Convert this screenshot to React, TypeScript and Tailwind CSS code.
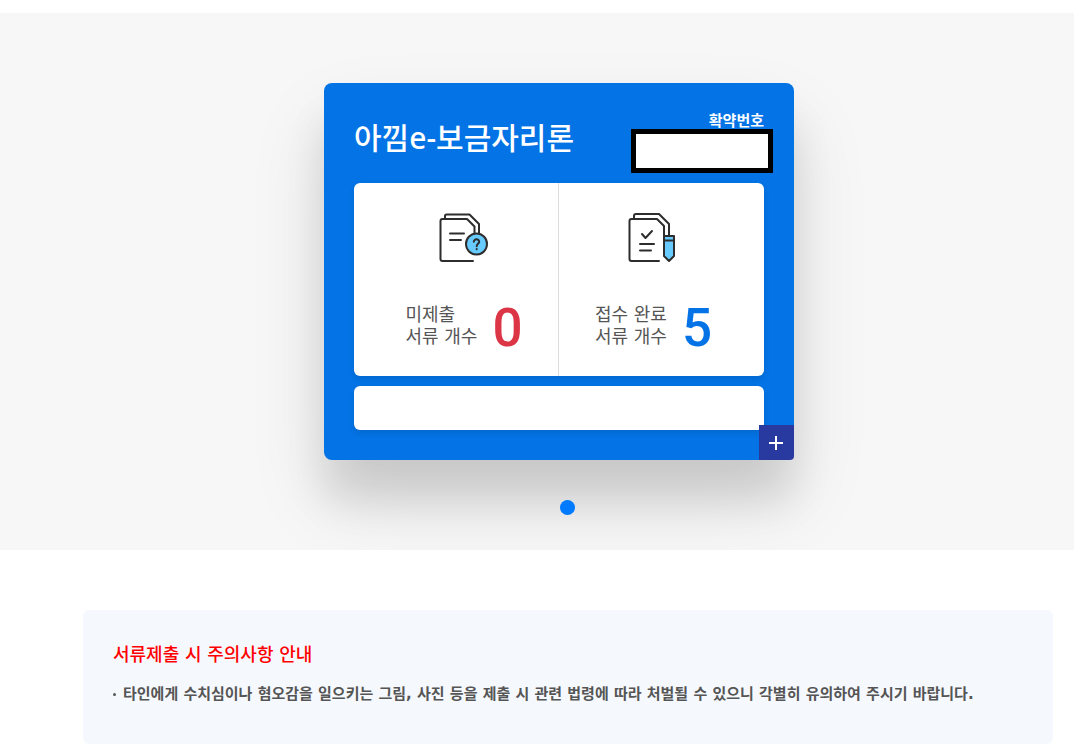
import type { ReactNode } from "react";

const NOTICES = [
  "타인에게 수치심이나 혐오감을 일으키는 그림, 사진 등을 제출 시 관련 법령에 따라 처벌될 수 있으니 각별히 유의하여 주시기 바랍니다.",
];

function MissingDocIcon() {
  return (
    <svg viewBox="0 0 50 50" className="h-[50px] w-[50px]" fill="none" stroke="#2d2d2d" strokeWidth="2" strokeLinecap="round" strokeLinejoin="round" aria-hidden="true">
      <path d="M6 5V3Q6 1.500 7.500 1.500H30.500L40 11V22" />
      <path d="M34 48H3.500Q1.500 48 1.500 46V8Q1.500 6 3.500 6H28L35.500 13.500V22" />
      <path d="M11 20.500H25M11 27H22" />
      <circle cx="37.500" cy="31" r="10.500" fill="#68cbff" />
      <path d="M34.800 28.800C34.800 25.400 40.400 25.600 40.200 28.900C40.100 30.900 37.700 30.900 37.700 33.200M37.700 36V36.200" />
    </svg>
  );
}

function ReceivedDocIcon() {
  return (
    <svg viewBox="1 0 50 50" className="h-[50px] w-[50px] overflow-visible" fill="none" stroke="#2d2d2d" strokeWidth="2" strokeLinecap="round" strokeLinejoin="round" aria-hidden="true">
      <path d="M6 5V3Q6 1 8 1H31L41 11V22" />
      <path d="M31 48H3.500Q1.500 48 1.500 46V8Q1.500 6 3.500 6H29L36 13V22" />
      <path d="M14 21L17.500 25L24 18M12 31H26M12 37.500H23" />
      <path d="M36 23H46V43L41 48L36 43Z" fill="#68cbff" />
      <path d="M36 27.500H46" />
    </svg>
  );
}

function CountPanel({ icon, label, count, countClass }: { icon: ReactNode; label: string; count: number; countClass: string }) {
  return (
    <div className="flex flex-col items-center pt-[30px] pb-6">
      {icon}
      <div className="mt-[41px] flex items-start gap-[15px]">
        <p className="text-lg leading-[22px] whitespace-pre-line text-[#555]">{label}</p>
        <strong className={`font-[Roboto] text-[53px] leading-[48px] font-medium ${countClass}`}>{count}</strong>
      </div>
    </div>
  );
}

export default function App() {
  return (
    <main className="bg-white pt-[13px] font-['DejaVu_Sans','Noto_Sans_CJK_KR',sans-serif]">
      {/* Loan summary slider */}
      <section className="flex justify-center overflow-hidden bg-[#f7f7f7] pt-[70px] pb-[35px] pl-[62px]">
        <div className="flex flex-col items-center">
          <article className="relative mr-[18px] w-[470px] rounded-lg bg-[#0373e5] px-[30px] pt-[30px] pb-[30px] shadow-[0_40px_40px_rgba(0,0,0,0.1),0_40px_80px_rgba(0,0,0,0.11)]">
            <header className="flex h-[70px] justify-between text-white">
              <h1 className="pt-[3px] font-['Noto_Sans','Noto_Sans_CJK_KR',sans-serif] text-[30px] leading-[44px] font-medium">아낌e-보금자리론</h1>
              <div className="flex flex-col items-end">
                <label htmlFor="pledge-no" className="text-[15px] leading-4 font-bold">
                  확약번호
                </label>
                <input id="pledge-no" readOnly className="-mr-[9px] h-11 w-[142px] border-5 border-black bg-white px-2 text-sm text-black" />
              </div>
            </header>
            <div className="grid grid-cols-2 divide-x divide-[#ddd] rounded-md bg-white px-4 shadow-[0_3px_6px_rgba(0,0,0,0.1)]">
              <CountPanel icon={<MissingDocIcon />} label={"미제출\n서류 개수"} count={0} countClass="text-[#dc3545]" />
              <CountPanel icon={<ReceivedDocIcon />} label={"접수 완료\n서류 개수"} count={5} countClass="text-[#0373e5]" />
            </div>
            <div className="mt-[10px] h-11 rounded-md bg-white shadow-[0_3px_6px_rgba(0,0,0,0.1)]" />
            <button type="button" aria-label="더보기" className="absolute right-0 bottom-0 flex h-[35px] w-[35px] items-center justify-center rounded-br-sm bg-[#283a9f]">
              <svg viewBox="0 0 15 15" className="h-[15px] w-[15px]" stroke="#fff" strokeWidth="2" aria-hidden="true">
                <path d="M7 1V15M0 8H14" />
              </svg>
            </button>
          </article>
          <button type="button" aria-label="1" className="relative mt-10 mr-px h-[15px] w-[15px] rounded-full bg-[#007bff]" />
        </div>
      </section>

      {/* Submission notice */}
      <section className="pt-[60px] pl-[62px]">
        <div className="mx-auto max-w-[970px] rounded-md bg-[#f5f9fe] px-[30px] pt-[31px] pb-[37px]">
          <h2 className="text-lg leading-7 font-medium text-[#f00]">서류제출 시 주의사항 안내</h2>
          <ul className="mt-3 text-[15px] leading-[26px] font-bold text-[#555]">
            {NOTICES.map((notice) => (
              <li key={notice} className="flex items-center gap-[7px]">
                <span className="h-[3px] w-[3px] rounded-full bg-[#555]" />
                {notice}
              </li>
            ))}
          </ul>
        </div>
      </section>
    </main>
  );
}
